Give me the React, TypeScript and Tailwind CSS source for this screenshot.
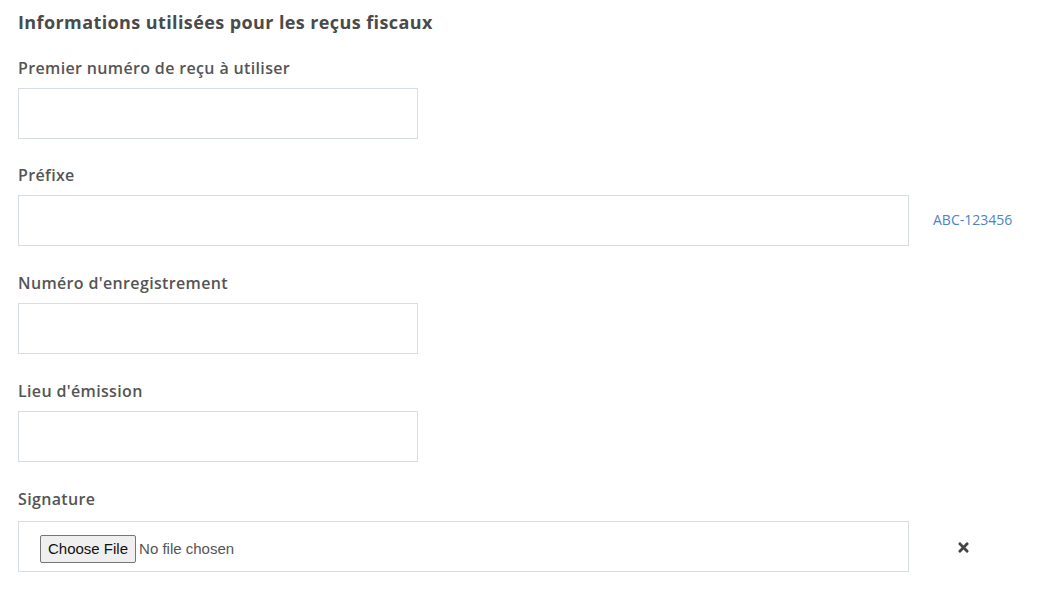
import React from "react";
import { FaTimes } from "react-icons/fa";

const font = { fontFamily: '"Open Sans", Lato, sans-serif' };

function Field({ label, wide, aside, mb = "mb-[25px]" }: { label: string; wide?: boolean; aside?: React.ReactNode; mb?: string }) {
  return (
    <div className={mb}>
      <div className="h-[24px] leading-[24px] text-[16px] font-semibold tracking-[0.35px] text-[#555555] mb-[8px]">{label}</div>
      <div className="flex items-center">
        <input
          type="text"
          className={`h-[51px] border border-[#d6dde6] bg-white outline-none ${wide ? "w-[891px]" : "w-[400px]"}`}
        />
        {aside}
      </div>
    </div>
  );
}

export default function App() {
  return (
    <div className="w-[1040px] h-[599px] bg-white px-[18px] pt-[10px]" style={font}>
      <h2 className="h-[24px] leading-[24px] text-[18px] font-bold tracking-[0.4px] text-[#4a4a4a] mb-[22px]">
        Informations utilisées pour les reçus fiscaux
      </h2>
      <Field label="Premier numéro de reçu à utiliser" mb="mb-[24px]" />
      <Field
        label="Préfixe"
        wide
        aside={<span className="ml-[24px] text-[14px] text-[#4a86c5] mt-[-3px]">ABC-123456</span>}
      />
      <Field label="Numéro d'enregistrement" />
      <Field label="Lieu d'émission" />
      <div>
        <div className="h-[24px] leading-[24px] text-[16px] font-semibold tracking-[0.35px] text-[#555555] mb-[10px]">Signature</div>
        <div className="flex items-center">
          <div className="w-[891px] h-[51px] border border-[#d6dde6] flex items-center pl-[21px] pt-[5px]">
            <button
              className="h-[28px] px-[7px] border border-[#767676] rounded-[2px] bg-[#efefef] text-[15px] text-[#111]"
              style={{ fontFamily: '"Liberation Sans", Arial, sans-serif' }}
            >
              Choose File
            </button>
            <span
              className="ml-[3px] text-[15px] text-[#555]"
              style={{ fontFamily: '"Liberation Sans", Arial, sans-serif' }}
            >
              No file chosen
            </span>
          </div>
          <FaTimes className="ml-[47px] mt-[1px] text-[#444] w-[15px] h-[15px]" />
        </div>
      </div>
    </div>
  );
}
